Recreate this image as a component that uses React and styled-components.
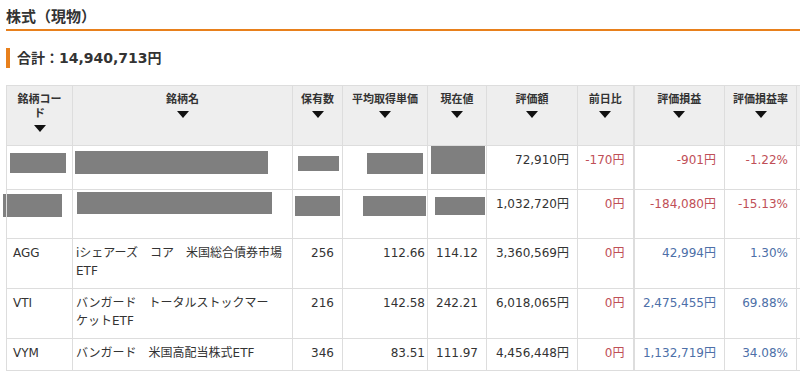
import React from "react";
import styled, { createGlobalStyle } from "styled-components";

const GlobalStyle = createGlobalStyle`
  body {
    margin: 0;
    background: #fff;
    overflow: hidden;
    font-family: "DejaVu Sans", "Noto Sans CJK JP", sans-serif;
    color: #333;
  }
`;

const ORANGE = "#e8801c";

const Page = styled.div`
  padding: 0 0 0 6px;
  width: 1000px;
`;

const Title = styled.h2`
  margin: 0;
  padding: 7px 0 1px;
  font-size: 15px;
  line-height: 21px;
  font-weight: bold;
  color: #333;
  border-bottom: 2px solid ${ORANGE};
`;

const Total = styled.h3`
  margin: 17px 0 17px;
  padding-left: 7px;
  border-left: 4px solid ${ORANGE};
  font-size: 14px;
  line-height: 20px;
  font-weight: bold;
  color: #333;
`;

const Table = styled.table`
  border-collapse: collapse;
  table-layout: fixed;
  width: 890px;
  font-size: 12px;
  line-height: 18px;
  line-break: strict;
`;

const Th = styled.th`
  background: #eeeeee;
  border: 1px solid #dddddd;
  border-left-width: ${(p) => (p.$thick ? "2px" : "1px")};
  padding: 7px 6px 0;
  height: 52px;
  vertical-align: top;
  text-align: center;
  font-size: 11px;
  line-height: 14px;
  font-weight: bold;
  color: #333;
`;

const Tri = styled.span`
  display: block;
  width: 0;
  height: 0;
  margin: 4px auto 0;
  border-left: 6px solid transparent;
  border-right: 6px solid transparent;
  border-top: 7px solid #111;
`;

const Td = styled.td`
  border: 1px solid #dddddd;
  border-left-width: ${(p) => (p.$thick ? "2px" : "1px")};
  padding: 5px ${(p) => p.$pr}px 8px ${(p) => p.$pl}px;
  height: ${(p) => p.$h}px;
  vertical-align: top;
  text-align: ${(p) => p.$align};
  color: ${(p) => (p.$tone === "neg" ? "#bf4f57" : p.$tone === "pos" ? "#4d6fa8" : "#333")};
  white-space: ${(p) => (p.$align === "right" ? "nowrap" : "normal")};
`;

const Redact = styled.span`
  display: block;
  background: #7f7f7f;
  width: ${(p) => p.$w}px;
  height: ${(p) => p.$hh}px;
  margin-left: ${(p) => p.$dx}px;
  margin-top: ${(p) => p.$dy}px;
`;

const columns = [
  { title: "銘柄コード", width: 66, align: "left", pl: 6, pr: 4 },
  { title: "銘柄名", width: 220, align: "left", pl: 3, pr: 6 },
  { title: "保有数", width: 50, align: "right", pl: 4, pr: 8 },
  { title: "平均取得単価", width: 85, align: "right", pl: 4, pr: 2 },
  { title: "現在値", width: 59, align: "right", pl: 4, pr: 8 },
  { title: "評価額", width: 91, align: "right", pl: 4, pr: 8 },
  { title: "前日比", width: 56, align: "right", pl: 4, pr: 8 },
  { title: "評価損益", width: 91, align: "right", pl: 4, pr: 8, thick: true },
  { title: "評価損益率", width: 72, align: "right", pl: 4, pr: 8 },
  { title: "", width: 100, align: "right", pl: 4, pr: 8 },
];

// [dx, dy, w, h] for the painted-over cells
const rows = [
  {
    h: 30,
    redact: [[-3, 2, 56, 20], [-1, 0, 193, 23], [1, 5, 41, 15], [20, 2, 56, 21], [-1, -6, 54, 29]],
    cells: ["72,910円", ["-170円", "neg"], ["-901円", "neg"], ["-1.22%", "neg"], ""],
  },
  {
    h: 35,
    redact: [[-10, -1, 59, 23], [1, -3, 195, 22], [-2, 1, 45, 20], [16, 1, 63, 20], [3, 2, 50, 18]],
    cells: ["1,032,720円", ["0円", "neg"], ["-184,080円", "neg"], ["-15.13%", "neg"], ""],
  },
  {
    h: 36,
    cells: ["AGG", "iシェアーズ\u3000コア\u3000米国総合債券市場ETF", "256", "112.66", "114.12", "3,360,569円",
      ["0円", "neg"], ["42,994円", "pos"], ["1.30%", "pos"], ""],
  },
  {
    h: 36,
    cells: ["VTI", "バンガード\u3000トータルストックマーケットETF", "216", "142.58", "242.21", "6,018,065円",
      ["0円", "neg"], ["2,475,455円", "pos"], ["69.88%", "pos"], ""],
  },
  {
    h: 18,
    cells: ["VYM", "バンガード\u3000米国高配当株式ETF", "346", "83.51", "111.97", "4,456,448円",
      ["0円", "neg"], ["1,132,719円", "pos"], ["34.08%", "pos"], ""],
  },
];

const HoldingRow = ({ row }) => {
  const redact = row.redact || [];
  const cells = [...redact.map((r) => ({ r })), ...row.cells.map((c) => (Array.isArray(c) ? { text: c[0], tone: c[1] } : { text: c }))];
  return (
    <tr>
      {cells.map((c, i) => {
        const col = columns[i];
        return (
          <Td key={i} $h={row.h} $align={col.align} $pl={col.pl} $pr={col.pr} $tone={c.tone} $thick={col.thick}>
            {c.r ? <Redact $dx={c.r[0]} $dy={c.r[1]} $w={c.r[2]} $hh={c.r[3]} /> : c.text}
          </Td>
        );
      })}
    </tr>
  );
};

const App = () => (
  <Page lang="ja">
    <GlobalStyle />
    <Title>株式（現物）</Title>
    <Total>合計：14,940,713円</Total>
    <Table>
      <colgroup>
        {columns.map((c, i) => (
          <col key={i} style={{ width: c.width }} />
        ))}
      </colgroup>
      <thead>
        <tr>
          {columns.map((c, i) => (
            <Th key={i} $thick={c.thick}>
              {c.title}
              {c.title && <Tri />}
            </Th>
          ))}
        </tr>
      </thead>
      <tbody>
        {rows.map((r, i) => (
          <HoldingRow key={i} row={r} />
        ))}
      </tbody>
    </Table>
  </Page>
);

export default App;
